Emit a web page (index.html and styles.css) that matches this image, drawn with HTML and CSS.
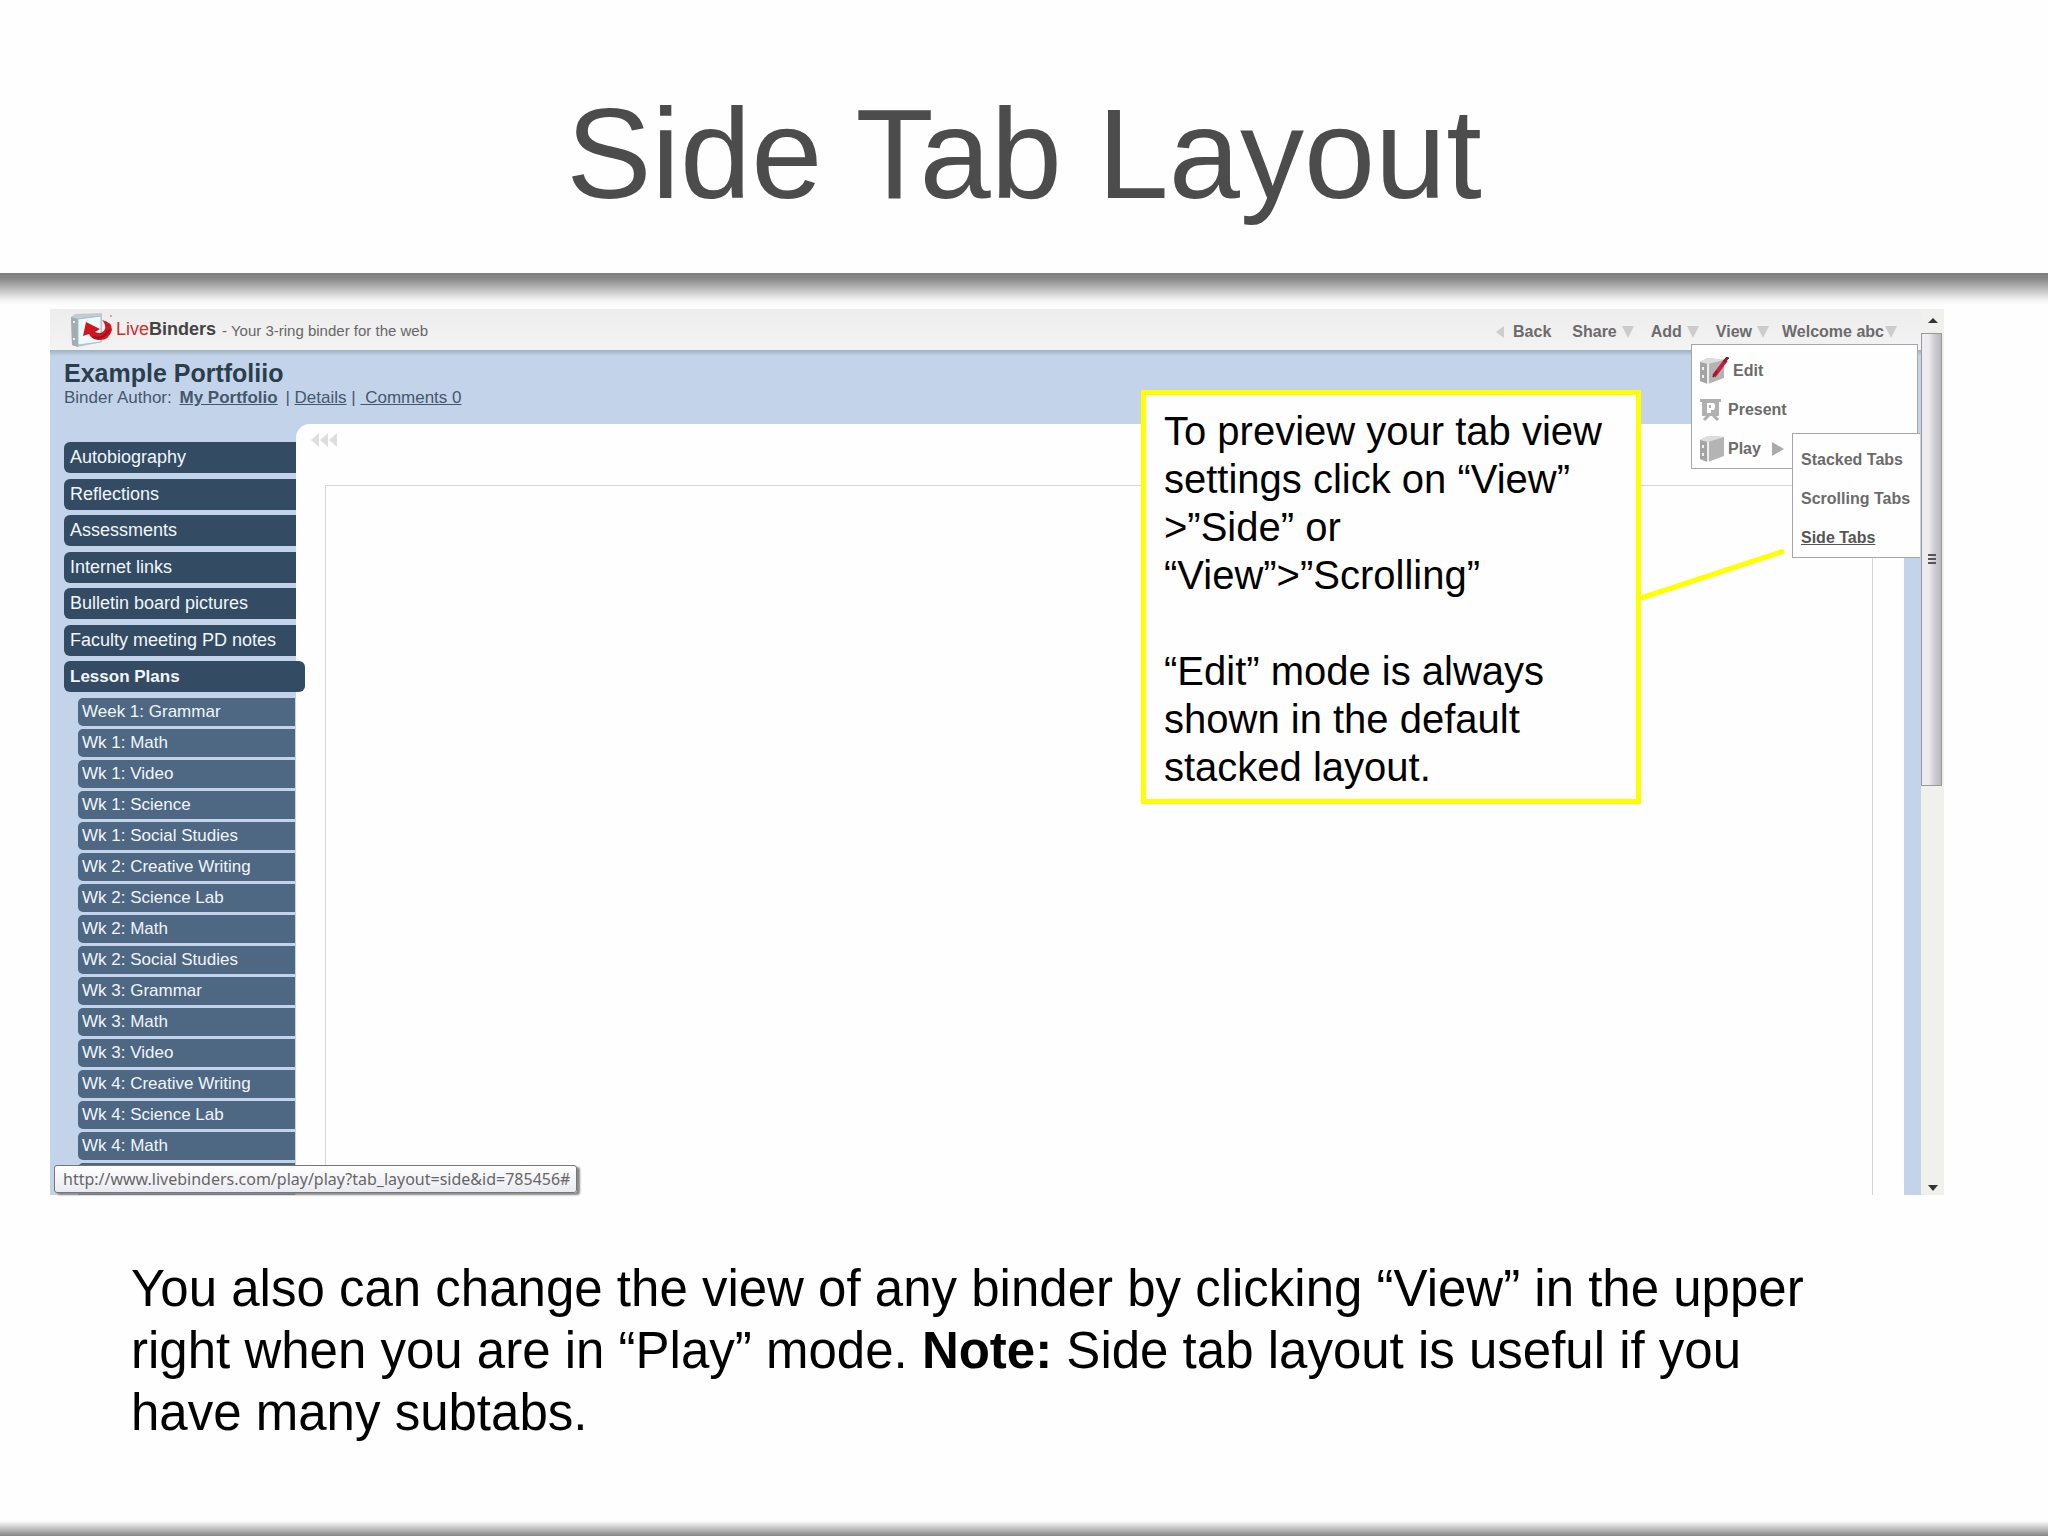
FILE: index.html
```html
<!DOCTYPE html>
<html lang="en">
<head>
<meta charset="utf-8">
<title>Side Tab Layout</title>
<link rel="stylesheet" href="styles.css">
</head>
<body>
<main class="slide">
  <header class="slide-head"><h1>Side Tab Layout</h1></header>
  <div class="rule-top"></div>

  <section class="shot">
    <div class="app">
      <div class="bar">
        <div class="brand">
          <svg class="logo" width="44" height="36" viewBox="0 0 44 36" aria-hidden="true">
            <path d="M1 5 5 2 32 1 32 30 8 35 2 33Z" fill="#c3cbcd"/>
            <path d="M1 5 8 7 8 35 2 33Z" fill="#a3acaf"/>
            <path d="M3 10h2M3 27h2" stroke="#e9eeee" stroke-width="2"/>
            <path d="M8 7 31 4 31 30 8 33Z" fill="#eef9fb" stroke="#9cc3cb"/>
            <path d="M16 10 30 17 25 20Q32 23 35 17Q36 12 32 8Q42 10 42 18Q39 29 28 28Q21 27 19 22L13 24Z" fill="#cf1722"/>
            <path d="M23 25Q33 28 39 18" fill="none" stroke="#9c121b" stroke-width="2"/>
            <circle cx="41" cy="4" r="1" fill="#d88"/>
          </svg>
          <span class="name"><span class="live">Live</span>Binders</span>
          <span class="tag">- Your 3-ring binder for the web</span>
        </div>
        <nav class="menu">
          <button type="button" class="back"><i class="tri-left"></i>Back</button>
          <button type="button">Share<i class="tri"></i></button>
          <button type="button">Add<i class="tri"></i></button>
          <button type="button">View<i class="tri"></i></button>
          <button type="button" class="user">Welcome abc<i class="tri"></i></button>
        </nav>
      </div>
      <div class="binder-head">
        <h2>Example Portfoliio</h2>
        <p>Binder Author: <a class="author" href="#">My Portfolio</a> | <a href="#">Details</a> <span class="sep">|</span> <a href="#">&nbsp;Comments 0</a></p>
      </div>
      <div class="work">
        <nav class="side">
          <ul class="tabs">
            <li><a href="#">Autobiography</a></li>
            <li><a href="#">Reflections</a></li>
            <li><a href="#">Assessments</a></li>
            <li><a href="#">Internet links</a></li>
            <li><a href="#">Bulletin board pictures</a></li>
            <li><a href="#">Faculty meeting PD notes</a></li>
            <li class="active"><a href="#">Lesson Plans</a></li>
          </ul>
          <ul class="subtabs">
            <li><a href="#">Week 1: Grammar</a></li>
            <li><a href="#">Wk 1: Math</a></li>
            <li><a href="#">Wk 1: Video</a></li>
            <li><a href="#">Wk 1: Science</a></li>
            <li><a href="#">Wk 1: Social Studies</a></li>
            <li><a href="#">Wk 2: Creative Writing</a></li>
            <li><a href="#">Wk 2: Science Lab</a></li>
            <li><a href="#">Wk 2: Math</a></li>
            <li><a href="#">Wk 2: Social Studies</a></li>
            <li><a href="#">Wk 3: Grammar</a></li>
            <li><a href="#">Wk 3: Math</a></li>
            <li><a href="#">Wk 3: Video</a></li>
            <li><a href="#">Wk 4: Creative Writing</a></li>
            <li><a href="#">Wk 4: Science Lab</a></li>
            <li><a href="#">Wk 4: Math</a></li>
            <li class="more"></li>
          </ul>
        </nav>
        <div class="panel">
          <svg class="collapse" width="26" height="16" viewBox="0 0 26 16" aria-hidden="true"><path d="M8 1v14L0 8ZM17 1v14L9 8ZM26 1v14L18 8Z" fill="#dedede"/></svg>
          <div class="frame"></div>
        </div>
      </div>
    </div>
    <div class="scroll" aria-hidden="true">
      <i class="arrow up"></i>
      <div class="thumb"><i class="grip"></i></div>
      <i class="arrow down"></i>
    </div>

    <ul class="drop view-menu">
      <li><a href="#">
        <svg width="30" height="28" viewBox="0 0 30 28" aria-hidden="true"><path d="M1 5 9 1 25 3 25 21 9 27 1 24Z" fill="#b4b4b4"/><path d="M1 5 9 7 9 27 1 24Z" fill="#a4a4a4"/><path d="M1 5 9 1 25 3 9 7Z" fill="#ddd"/><path d="M4 10v3M4 18v3M9 7v20" stroke="#eee" stroke-width="2"/><path d="M15 19 27 3" stroke="#c81e3a" stroke-width="4"/><path d="M25 5 29 0" stroke="#7d2633" stroke-width="3"/><path d="M14 20 18 14" stroke="#82203a" stroke-width="2"/></svg>Edit</a></li>
      <li><a href="#">
        <svg width="25" height="28" viewBox="0 0 25 28" aria-hidden="true"><path d="M1 3h21v3H1ZM3 6h17v14H3Z" fill="#b0b0b0"/><path d="M8 7h7q2 3 0 7h-3v3H8Z" fill="#fff"/><path d="M10 9h2v3h-2Z" fill="#b0b0b0"/><path d="M5 24 10 19M19 24 14 19" stroke="#b0b0b0" stroke-width="3"/></svg>Present</a></li>
      <li><a href="#">
        <svg width="25" height="28" viewBox="0 0 25 28" aria-hidden="true"><path d="M1 5 9 1 25 2 25 21 9 27 1 24Z" fill="#b4b4b4"/><path d="M1 5 9 7 9 27 1 24Z" fill="#a4a4a4"/><path d="M1 5 9 1 25 2 9 7Z" fill="#ddd"/><path d="M4 10v3M4 18v3M9 7v20" stroke="#eee" stroke-width="2"/></svg>Play<i class="tri-right"></i></a></li>
    </ul>
    <ul class="drop play-menu">
      <li><a href="#">Stacked Tabs</a></li>
      <li><a href="#">Scrolling Tabs</a></li>
      <li><a href="#" class="hover">Side Tabs</a></li>
    </ul>

    <div class="status">http://www.livebinders.com/play/play?tab_layout=side&amp;id=785456#</div>

    <svg class="pointer" width="146" height="52" viewBox="0 0 146 52" aria-hidden="true"><path d="M0 49 143 2" stroke="#ff0" stroke-width="5"/></svg>
    <aside class="callout">
      <p>To preview your tab view<br>settings click on “View”<br>&gt;”Side” or<br>“View”&gt;”Scrolling”</p>
      <p>“Edit” mode is always<br>shown in the default<br>stacked layout.</p>
    </aside>
  </section>

  <p class="note">You also can change the view of any binder by clicking “View” in the upper right when you are in “Play” mode. <b>Note:</b> Side tab layout is useful if you have many subtabs.</p>
  <div class="rule-bottom"></div>
</main>
</body>
</html>
```
FILE: styles.css
```css
* { box-sizing: border-box; }
body { margin: 0; background: #fefefe; color: #000; font-family: "Liberation Sans", Arial, sans-serif; }
h1, h2, p, ul { margin: 0; padding: 0; }
ul { list-style: none; }
a { color: inherit; }
button { font: inherit; color: inherit; background: none; border: 0; padding: 0; display: flex; align-items: center; gap: 5px; }
svg { flex: none; display: block; }

.slide { min-height: 100vh; display: flex; flex-direction: column; }
.slide-head { padding: 80px 0 46px; text-align: center; }
h1 { font-size: 128px; line-height: 147px; font-weight: 400; color: #4c4c4c; }
.rule-top { height: 32px; margin-bottom: 4px; background: linear-gradient(#7d7d7d, #8c8c8c 20%, #f4f4f4 85%, #fefefe); }
.rule-bottom { height: 15px; margin-top: auto; background: linear-gradient(#fefefe, #858585); }

.shot { position: relative; margin: 0 104px 0 50px; display: flex; }
.app { flex: 1; min-width: 0; background: #c3d4ea; }

.bar { height: 41px; display: flex; justify-content: space-between; align-items: center; padding: 0 24px 0 20px; background: linear-gradient(#ededed, #f3f3f3); }
.brand { display: flex; align-items: center; white-space: nowrap; }
.logo { margin-right: 2px; }
.name { font-size: 18px; font-weight: 700; color: #444; margin-right: 6px; }
.live { color: #c9302f; font-weight: 400; }
.tag { font-size: 15px; color: #666; padding-top: 2px; }
.menu { display: flex; gap: 17px; font-size: 16px; font-weight: 700; color: #6b6b6b; padding-top: 5px; }
.back { gap: 9px; margin-right: 4px; }
.user { gap: 1px; margin-left: -4px; }
.tri { border: 6px solid transparent; border-top: 12px solid #ccc; border-bottom: 0; }
.tri-left { border: 6px solid transparent; border-right: 8px solid #ccc; border-left: 0; }
.tri-right { border: 7px solid transparent; border-left: 12px solid #aaa; border-right: 0; margin-left: 7px; }

.binder-head { height: 74px; padding: 9px 14px 0; color: #2b3e4c; background: linear-gradient(#9fb0bf, #c3d4ea 6px); }
h2 { font-size: 25px; line-height: 28px; }
.binder-head p { font-size: 17px; line-height: 21px; color: #44586a; }
.author { font-weight: 700; margin: 0 3px; }

.work { display: flex; }
.side { position: relative; z-index: 1; width: 246px; padding: 18px 0 0 14px; }
.side a { display: block; color: #f0f6fb; text-decoration: none; white-space: nowrap; }
.tabs { height: 250px; display: flex; flex-direction: column; justify-content: space-between; font-size: 18px; }
.tabs a { line-height: 31px; padding-left: 6px; background: #344c63; border-radius: 6px 0 0 6px; }
.tabs .active { margin-right: -9px; font-size: 17px; font-weight: 700; }
.tabs .active a { border-radius: 6px; }
.subtabs { display: grid; gap: 3px; margin: 6px 1px 0 14px; font-size: 17px; }
.subtabs a { line-height: 28px; padding-left: 4px; background: #4e6783; border-radius: 5px 0 0 5px; }
.more { height: 32px; background: #4e6783; border-radius: 5px 0 0 0; }
.panel { flex: 1; display: flex; flex-direction: column; margin-right: 17px; padding: 8px 31px 0 15px; background: #fefefe; border-top-left-radius: 14px; }
.frame { flex: 1; margin: 37px 0 0 14px; border: 1px solid #d5d5d8; border-bottom: 0; }

.scroll { width: 23px; display: flex; flex-direction: column; background: #f0f0ed; }
.arrow { align-self: center; border: 5px solid transparent; }
.up { border-bottom: 5px solid #333; border-top: 0; margin: 9px 0 10px; }
.down { border-top: 6px solid #333; border-bottom: 0; margin: auto 0 4px; }
.thumb { height: 453px; margin-right: 2px; display: flex; align-items: center; justify-content: center; border: 1px solid #999; background: linear-gradient(90deg, #efecef 0 35%, #cfcdd1 65%, #b9b8bd); }
.grip { width: 8px; height: 12px; background: repeating-linear-gradient(#555 0 2px, transparent 2px 4px); }

.drop { position: absolute; background: #fefefe; border: 1px solid #a5a5aa; font-size: 16px; font-weight: 700; color: #6b6b6b; }
.drop li { height: 39px; display: flex; align-items: center; }
.drop a { display: flex; align-items: center; gap: 4px; text-decoration: none; }
.drop a.hover { color: #555; text-decoration: underline; }
.view-menu { top: 35px; right: 26px; width: 227px; padding: 6px 0 0 7px; height: 125px; }
.play-menu { top: 124px; right: 24px; width: 128px; padding: 6px 0 0 8px; height: 125px; border-right: 0; }

.status { position: absolute; z-index: 2; left: 4px; bottom: 2px; padding: 0 6px 0 8px; line-height: 26px; font-family: "Noto Sans", sans-serif; font-size: 16px; color: #666; background: linear-gradient(#fff, #e9e9f2); border: 1px solid #777; border-radius: 3px; box-shadow: 3px 2px 2px #888; }

.pointer { position: absolute; top: 240px; right: 157px; }
.callout { position: absolute; top: 81px; right: 303px; width: 500px; padding: 12px 18px 8px; border: 5px solid #ff0; background: #fefefe; font-size: 40px; line-height: 48px; white-space: nowrap; }
.callout p + p { margin-top: 48px; }

.note { margin: 63px 220px 40px 131px; font-size: 51px; line-height: 62px; }
```
